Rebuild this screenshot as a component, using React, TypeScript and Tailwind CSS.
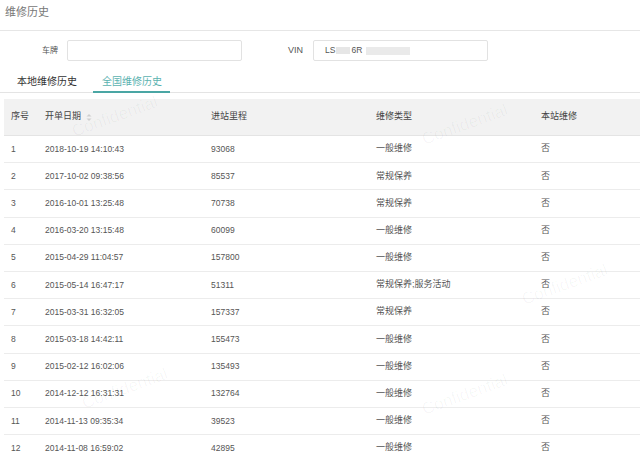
const rows = [
  ['1', '2018-10-19 14:10:43', '93068', '一般维修', '否'],
  ['2', '2017-10-02 09:38:56', '85537', '常规保养', '否'],
  ['3', '2016-10-01 13:25:48', '70738', '常规保养', '否'],
  ['4', '2016-03-20 13:15:48', '60099', '一般维修', '否'],
  ['5', '2015-04-29 11:04:57', '157800', '一般维修', '否'],
  ['6', '2015-05-14 16:47:17', '51311', '常规保养;服务活动', '否'],
  ['7', '2015-03-31 16:32:05', '157337', '常规保养', '否'],
  ['8', '2015-03-18 14:42:11', '155473', '一般维修', '否'],
  ['9', '2015-02-12 16:02:06', '135493', '一般维修', '否'],
  ['10', '2014-12-12 16:31:31', '132764', '一般维修', '否'],
  ['11', '2014-11-13 09:35:34', '39523', '一般维修', '否'],
  ['12', '2014-11-08 16:59:02', '42895', '一般维修', '否'],
];

const cols = ['w-[34px]', 'w-[166px]', 'w-[165px]', 'w-[165px]', 'flex-1'];

function SortIcon() {
  return (
    <svg width="6" height="9" viewBox="0 0 6 9" className="ml-[5px]">
      <path d="M3 1 L5.5 3.6 L0.5 3.6 Z" fill="#cfcfcf" />
      <path d="M3 8 L5.5 5.4 L0.5 5.4 Z" fill="#cfcfcf" />
    </svg>
  );
}

const marks = [
  { left: 'left-[70px]', top: 'top-[104px]' },
  { left: 'left-[420px]', top: 'top-[112px]' },
  { left: 'left-[520px]', top: 'top-[272px]' },
  { left: 'left-[80px]', top: 'top-[376px]' },
  { left: 'left-[420px]', top: 'top-[382px]' },
];

export default function App() {
  return (
    <div
      className="relative w-[640px] h-[453px] bg-white overflow-hidden text-[#555]"
      style={{ fontFamily: '"Liberation Sans", "Noto Sans CJK SC", sans-serif' }}
    >
      {/* Title */}
      <div className="h-[31px] px-[5px] pt-[4px] border-b border-[#e6e6e6] text-[11px] text-[#777]">
        维修历史
      </div>

      {/* Search row */}
      <div className="flex items-center mt-[9px] h-[21px] text-[8px] text-[#555]">
        <span className="w-[58px] text-right">车牌</span>
        <div className="ml-[9px] w-[175px] h-[21px] border border-[#e2e2e2] rounded-[2px]" />
        <span className="w-[61px] text-right text-[9px]">VIN</span>
        <div className="ml-[10px] w-[175px] h-[21px] border border-[#e2e2e2] rounded-[2px] flex items-center pl-[11px] text-[8.5px]">
          LS
          <span className="inline-block w-[14px] h-[7px] bg-[#e6e6e6] mx-[1px]" />
          6R
          <span className="inline-block w-[44px] h-[8px] bg-[#eaeaea] ml-[4px]" />
        </div>
      </div>

      {/* Tabs */}
      <div className="flex mt-[9px] h-[23px] border-b border-[#e4e4e4] text-[10px] whitespace-nowrap">
        <div className="w-[93px] pl-[17px] pt-[4px] text-[#333]">本地维修历史</div>
        <div className="w-[77px] pl-[9px] pt-[4px] text-[#5bb2b0] border-b-2 border-[#4aa6a4] -mb-[1px]">
          全国维修历史
        </div>
      </div>

      {/* Table */}
      <div className="mt-[6px] ml-[4px] text-[8.5px] whitespace-nowrap">
        <div className="flex items-center h-[37px] bg-[#f2f2f2] border-b border-[#e4e4e4] text-[9px] text-[#444]">
          <div className={`${cols[0]} pl-[7px]`}>序号</div>
          <div className={`${cols[1]} pl-[7px] flex items-center`}>
            开单日期
            <SortIcon />
          </div>
          <div className={`${cols[2]} pl-[7px]`}>进站里程</div>
          <div className={`${cols[3]} pl-[7px]`}>维修类型</div>
          <div className={`${cols[4]} pl-[7px]`}>本站维修</div>
        </div>
        {rows.map((r) => (
          <div key={r[0]} className="flex items-center h-[27.2px] border-b border-[#ececec] text-[#555]">
            {r.map((c, i) => (
              <div key={i} className={`${cols[i]} pl-[7px] ${i >= 3 ? 'text-[9px]' : ''}`}>
                {c}
              </div>
            ))}
          </div>
        ))}
      </div>

      {/* Watermarks */}
      {marks.map((m, i) => (
        <div
          key={i}
          className={`absolute ${m.left} ${m.top} -rotate-[20deg] text-[17px] text-[#000]/[0.035] pointer-events-none`}
        >
          Confidential
        </div>
      ))}
    </div>
  );
}
